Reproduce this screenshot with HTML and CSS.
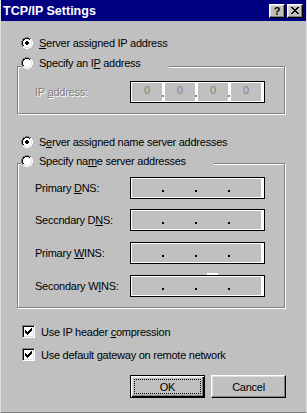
FILE: index.html
```html
<!DOCTYPE html>
<html>
<head>
<meta charset="utf-8">
<title>TCP/IP Settings</title>
<link rel="stylesheet" href="styles.css">
</head>
<body>
<div class="window">
  <div class="titlebar">
    <span class="title">TCP/IP Settings</span>
    <div class="caption-btns">
      <span class="cbtn help">?</span>
      <span class="cbtn close"><svg width="8" height="7" viewBox="0 0 8 7" shape-rendering="crispEdges"><path fill="#000" d="M0 0h2v1h-2z M6 0h2v1h-2z M1 1h2v1h-2z M5 1h2v1h-2z M2 2h4v1h-4z M3 3h2v1h-2z M2 4h4v1h-4z M1 5h2v1h-2z M5 5h2v1h-2z M0 6h2v1h-2z M6 6h2v1h-2z"/></svg></span>
    </div>
  </div>

  <div class="client">
    <div class="opt opt-first">
      <svg class="radio" width="12" height="12" viewBox="0 0 12 12" shape-rendering="crispEdges"><path fill="#808080" d="M4 0h4v1h-4z M2 1h2v1h-2z M8 1h2v1h-2z M1 2h1v2h-1z M0 4h1v4h-1z M1 8h1v2h-1z"/><path fill="#fff" d="M10 2h1v2h-1z M11 4h1v4h-1z M10 8h1v2h-1z M2 10h2v1h-2z M8 10h2v1h-2z M4 11h4v1h-4z M4 2h4v1h-4z M3 3h6v1h-6z M2 4h8v4h-8z M3 8h6v1h-6z M4 9h4v1h-4z"/><path fill="#000" d="M4 1h4v1h-4z M2 2h2v1h-2z M8 2h1v1h-1z M2 3h1v1h-1z M1 4h1v4h-1z M2 8h1v1h-1z"/><path fill="#dfdfdf" d="M9 2h1v1h-1z M9 3h1v1h-1z M10 4h1v4h-1z M9 8h1v1h-1z M2 9h2v1h-2z M8 9h2v1h-2z M4 10h4v1h-4z"/><path fill="#000" d="M5 4h2v1h-2z M4 5h4v2h-4z M5 7h2v1h-2z"/></svg>
      <span><u>S</u>erver assigned IP address</span>
    </div>

    <div class="group group-ip">
      <div class="opt legend legend-ip">
        <svg class="radio" width="12" height="12" viewBox="0 0 12 12" shape-rendering="crispEdges"><path fill="#808080" d="M4 0h4v1h-4z M2 1h2v1h-2z M8 1h2v1h-2z M1 2h1v2h-1z M0 4h1v4h-1z M1 8h1v2h-1z"/><path fill="#fff" d="M10 2h1v2h-1z M11 4h1v4h-1z M10 8h1v2h-1z M2 10h2v1h-2z M8 10h2v1h-2z M4 11h4v1h-4z M4 2h4v1h-4z M3 3h6v1h-6z M2 4h8v4h-8z M3 8h6v1h-6z M4 9h4v1h-4z"/><path fill="#000" d="M4 1h4v1h-4z M2 2h2v1h-2z M8 2h1v1h-1z M2 3h1v1h-1z M1 4h1v4h-1z M2 8h1v1h-1z"/><path fill="#dfdfdf" d="M9 2h1v1h-1z M9 3h1v1h-1z M10 4h1v4h-1z M9 8h1v1h-1z M2 9h2v1h-2z M8 9h2v1h-2z M4 10h4v1h-4z"/></svg>
        <span>Specify an I<u>P</u> address</span>
      </div>
      <div class="field-row row-ip disabled">
        <span class="lbl">IP <u>a</u>ddress:</span>
        <div class="ipfield">
          <span class="seg">0</span><span class="dot"></span><span class="seg">0</span><span class="dot"></span><span class="seg">0</span><span class="dot"></span><span class="seg">0</span>
        </div>
      </div>
    </div>

    <div class="opt opt-ns">
      <svg class="radio" width="12" height="12" viewBox="0 0 12 12" shape-rendering="crispEdges"><path fill="#808080" d="M4 0h4v1h-4z M2 1h2v1h-2z M8 1h2v1h-2z M1 2h1v2h-1z M0 4h1v4h-1z M1 8h1v2h-1z"/><path fill="#fff" d="M10 2h1v2h-1z M11 4h1v4h-1z M10 8h1v2h-1z M2 10h2v1h-2z M8 10h2v1h-2z M4 11h4v1h-4z M4 2h4v1h-4z M3 3h6v1h-6z M2 4h8v4h-8z M3 8h6v1h-6z M4 9h4v1h-4z"/><path fill="#000" d="M4 1h4v1h-4z M2 2h2v1h-2z M8 2h1v1h-1z M2 3h1v1h-1z M1 4h1v4h-1z M2 8h1v1h-1z"/><path fill="#dfdfdf" d="M9 2h1v1h-1z M9 3h1v1h-1z M10 4h1v4h-1z M9 8h1v1h-1z M2 9h2v1h-2z M8 9h2v1h-2z M4 10h4v1h-4z"/><path fill="#000" d="M5 4h2v1h-2z M4 5h4v2h-4z M5 7h2v1h-2z"/></svg>
      <span>S<u>e</u>rver assigned name server addresses</span>
    </div>

    <div class="group group-ns">
      <div class="opt legend legend-ns">
        <svg class="radio" width="12" height="12" viewBox="0 0 12 12" shape-rendering="crispEdges"><path fill="#808080" d="M4 0h4v1h-4z M2 1h2v1h-2z M8 1h2v1h-2z M1 2h1v2h-1z M0 4h1v4h-1z M1 8h1v2h-1z"/><path fill="#fff" d="M10 2h1v2h-1z M11 4h1v4h-1z M10 8h1v2h-1z M2 10h2v1h-2z M8 10h2v1h-2z M4 11h4v1h-4z M4 2h4v1h-4z M3 3h6v1h-6z M2 4h8v4h-8z M3 8h6v1h-6z M4 9h4v1h-4z"/><path fill="#000" d="M4 1h4v1h-4z M2 2h2v1h-2z M8 2h1v1h-1z M2 3h1v1h-1z M1 4h1v4h-1z M2 8h1v1h-1z"/><path fill="#dfdfdf" d="M9 2h1v1h-1z M9 3h1v1h-1z M10 4h1v4h-1z M9 8h1v1h-1z M2 9h2v1h-2z M8 9h2v1h-2z M4 10h4v1h-4z"/></svg>
        <span>Specify na<u>m</u>e server addresses</span>
      </div>
      <div class="field-row row-dns1">
        <span class="lbl">Primary <u>D</u>NS:</span>
        <div class="ipfield empty"><span class="seg"></span><span class="dot"></span><span class="seg"></span><span class="dot"></span><span class="seg"></span><span class="dot"></span><span class="seg"></span></div>
      </div>
      <div class="field-row row-dns2">
        <span class="lbl">Seccndary D<u>N</u>S:</span>
        <div class="ipfield empty"><span class="seg"></span><span class="dot"></span><span class="seg"></span><span class="dot"></span><span class="seg"></span><span class="dot"></span><span class="seg"></span></div>
      </div>
      <div class="field-row row-wins1">
        <span class="lbl">Primary <u>W</u>INS:</span>
        <div class="ipfield empty"><span class="seg"></span><span class="dot"></span><span class="seg"></span><span class="dot"></span><span class="seg"></span><span class="dot"></span><span class="seg"></span></div>
      </div>
      <div class="field-row row-wins2">
        <span class="lbl">Secondary W<u>I</u>NS:</span>
        <div class="ipfield empty"><span class="glitch"></span><span class="seg"></span><span class="dot"></span><span class="seg"></span><span class="dot"></span><span class="seg"></span><span class="dot"></span><span class="seg"></span></div>
      </div>
    </div>

    <div class="check check-first">
      <span class="cbox"><svg width="7" height="7" viewBox="0 0 7 7" shape-rendering="crispEdges"><path fill="#000" d="M6 0h1v1h-1z M5 1h2v1h-2z M0 2h1v1h-1z M4 2h3v1h-3z M0 3h2v1h-2z M3 3h3v1h-3z M0 4h5v1h-5z M1 5h3v1h-3z M2 6h1v1h-1z"/></svg></span>
      <span>Use IP header <u>c</u>ompression</span>
    </div>
    <div class="check check-second">
      <span class="cbox"><svg width="7" height="7" viewBox="0 0 7 7" shape-rendering="crispEdges"><path fill="#000" d="M6 0h1v1h-1z M5 1h2v1h-2z M0 2h1v1h-1z M4 2h3v1h-3z M0 3h2v1h-2z M3 3h3v1h-3z M0 4h5v1h-5z M1 5h3v1h-3z M2 6h1v1h-1z"/></svg></span>
      <span>Use default <u>g</u>ateway on remote network</span>
    </div>

    <div class="buttons">
      <button class="btn default"><span class="focus">OK</span></button>
      <button class="btn">Cancel</button>
    </div>
  </div>
</div>
</body>
</html>
```

FILE: styles.css
```css
* { box-sizing: border-box; }
html, body { margin: 0; padding: 0; background: #c0c0c0; }
body {
  font-family: "Liberation Sans", Arial, sans-serif;
  font-size: 11px;
  letter-spacing: -0.25px;
  color: #000;
}
u { text-decoration: underline; text-underline-offset: 1px; }

.window {
  width: 307px;
  height: 413px;
  background: #c0c0c0;
  border-left: 1px solid #dfdfdf;
  border-right: 1px solid #dfdfdf;
  border-bottom: 1px solid #808080;
  overflow: hidden;
}

.titlebar {
  height: 21px;
  background: #000080;
  display: flex;
  align-items: center;
  justify-content: space-between;
  padding: 0 3px 0 2px;
}
.title {
  color: #fff;
  font-weight: bold;
  font-size: 12.5px;
  letter-spacing: 0;
}
.caption-btns { display: flex; gap: 2px; }
.cbtn {
  width: 16px;
  height: 14px;
  background: #c0c0c0;
  border: 1px solid;
  border-color: #fff #000 #000 #fff;
  box-shadow: inset -1px -1px 0 #808080, inset 1px 1px 0 #dfdfdf;
  display: flex;
  align-items: center;
  justify-content: center;
}
.help { font-weight: bold; font-size: 11px; line-height: 1; padding-top: 1px; letter-spacing: 0; }
.close svg { display: block; }

.client {
  padding: 12px 21px 0 16px;
}

.opt {
  display: flex;
  align-items: center;
  height: 20px;
  gap: 6px;
  padding-left: 4px;
}
.radio { display: block; flex: none; }

.group {
  border: 1px solid #808080;
  box-shadow: 1px 1px 0 #fff, inset 1px 1px 0 #fff;
}
.legend {
  width: fit-content;
  margin-left: 3px;
  padding-left: 0;
  padding-right: 28px;
  background: #c0c0c0;
}
.group-ip { margin-top: 13px; padding-bottom: 10px; }
.legend-ip { margin-top: -14px; }

.opt-ns { margin-top: 18px; }
.group-ns { margin-top: 11px; padding-bottom: 10px; }
.legend-ns { margin-top: -13px; }

.field-row {
  display: flex;
  align-items: center;
  height: 22px;
  padding-left: 17px;
}
.lbl { flex: 0 0 95px; }
.row-ip { margin-top: 8px; }
.row-dns1 { margin-top: 6px; }
.row-dns2 { margin-top: 10px; }
.row-wins1 { margin-top: 11px; }
.row-wins2 { margin-top: 11px; }

.disabled .lbl { color: #808080; text-shadow: 1px 1px 0 #fff; }

.ipfield {
  position: relative;
  width: 135px;
  height: 22px;
  border: 1px solid #000;
  background: #fff;
  display: flex;
  align-items: stretch;
  padding: 1px 3px 1px 1px;
}
.seg {
  flex: 0 0 30px;
  background: #c0c0c0;
  color: #808080;
  text-align: center;
  line-height: 12px;
  padding-top: 1px;
}
.dot {
  flex: 0 0 3px;
  position: relative;
}
.dot::after {
  content: "";
  position: absolute;
  left: 0;
  top: 12px;
  width: 2px;
  height: 2px;
  background: #808080;
}
.ipfield.empty .dot { background: #c0c0c0; }
.ipfield.empty .dot::after { background: #000; top: 11px; }

.glitch {
  position: absolute;
  left: 76px;
  top: -3px;
  width: 11px;
  height: 2px;
  background: #fff;
}

.check {
  display: flex;
  align-items: center;
  height: 13px;
  gap: 6px;
  padding-left: 5px;
}
.check-first { margin-top: 17px; }
.check-second { margin-top: 10px; }
.cbox {
  flex: none;
  width: 13px;
  height: 13px;
  background: #fff;
  border: 1px solid;
  border-color: #808080 #fff #fff #808080;
  box-shadow: inset 1px 1px 0 #000, inset -1px -1px 0 #dfdfdf;
  padding: 2px 0 0 2px;
}
.cbox svg { display: block; }

.buttons {
  display: flex;
  justify-content: flex-end;
  gap: 6px;
  margin-top: 14px;
  margin-right: -1px;
}
.btn {
  width: 75px;
  height: 23px;
  font-family: inherit;
  font-size: 11px;
  letter-spacing: -0.25px;
  color: #000;
  background: #c0c0c0;
  border: 1px solid;
  border-color: #fff #000 #000 #fff;
  box-shadow: inset -1px -1px 0 #808080, inset 1px 1px 0 #dfdfdf;
  padding: 0;
  display: flex;
  align-items: center;
  justify-content: center;
}
.btn.default {
  border: 1px solid #000;
  box-shadow: inset 1px 1px 0 #fff, inset -1px -1px 0 #000, inset -2px -2px 0 #808080, inset 2px 2px 0 #dfdfdf;
}
.focus {
  display: flex;
  align-items: center;
  justify-content: center;
  width: 67px;
  height: 15px;
  outline: 1px dotted #000;
  outline-offset: -1px;
}
```
